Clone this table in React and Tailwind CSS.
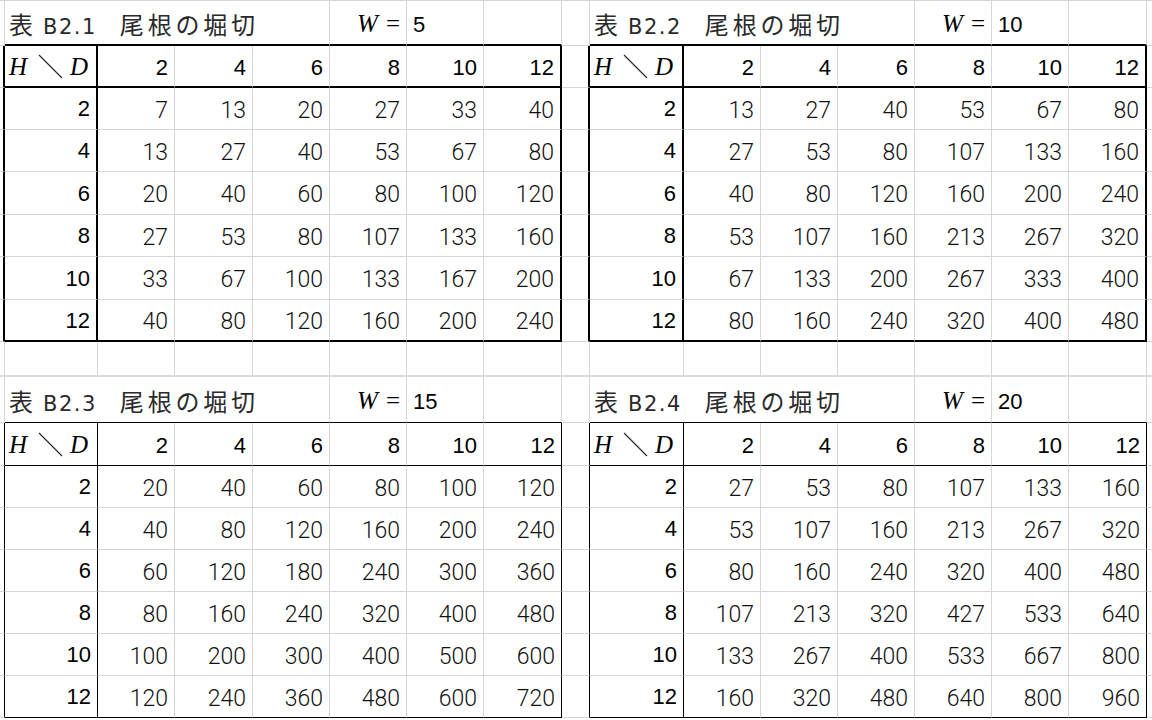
import React from "react";

// column template shared by every sheet row
const COLS =
  "grid grid-cols-[5px_93px_77px_78px_77px_77px_77px_78px_28px_94px_77px_77px_77px_77px_77px_78px_1fr]";

const G_R = "border-r border-r-[#d6d6d6]";
const G_B = "border-b border-b-[#d6d6d6]";

const UPPER = {
  side: "border-r-2 border-r-black",
  bottom: "border-b-2 border-b-black",
};
const LOWER = {
  side: "border-r border-r-black",
  bottom: "border-b border-b-black",
};

const SIZES = [2, 4, 6, 8, 10, 12];

const SANS = "font-['Liberation_Sans',Arial,sans-serif] text-[22px] text-black";
const THIN = "font-['Roboto','Noto_Sans_CJK_JP',sans-serif] font-light text-[23px] text-[#111]";
const MATH = "font-['Liberation_Serif','Times_New_Roman',serif] italic text-[25px] text-black";
const JP = "font-['Noto_Sans_CJK_JP',sans-serif] text-[24px] text-[#2a2a2a]";

const Cell = ({ className = "", children }) => (
  <div className={`flex items-center overflow-visible whitespace-nowrap ${className}`}>
    {children}
  </div>
);

const HD = () => (
  <div className={`flex items-center pl-[4px] pt-[2px] ${MATH}`}>
    <span>H</span>
    <svg width="43" height="26" viewBox="0 0 43 26">
      <line x1="12" y1="1" x2="35" y2="24" stroke="#222" strokeWidth="1.1" />
    </svg>
    <span>D</span>
  </div>
);

const TitleCells = ({ no, w, k }) => (
  <>
    <Cell className={`col-span-4 ${G_R} ${k.bottom} pl-[4px] pt-[5px] ${JP}`}>
      <span className="leading-none">
        <span>表</span>
        <span className="ml-[10px] text-[21px] tracking-[1.5px] font-['DejaVu_Sans',sans-serif]">
          B2.{no}
        </span>
        <span className="ml-[23px] tracking-[3.8px]">尾根の堀切</span>
      </span>
    </Cell>
    <Cell className={`justify-end pr-[6px] pt-[3px] ${G_R} ${k.bottom} ${MATH}`}>
      <span>W</span>
      <span className="not-italic ml-[8px]">=</span>
    </Cell>
    <Cell className={`pl-[6px] pt-[3px] ${G_R} ${k.bottom} ${SANS}`}>{w}</Cell>
    <Cell className={`${G_R} ${k.bottom}`} />
  </>
);

const TitleRow = ({ left, right, k, h }) => (
  <div className={`${COLS} ${h}`}>
    <Cell className={`${G_R} ${G_B}`} />
    <TitleCells {...left} k={k} />
    <Cell className={`${G_R} ${G_B}`} />
    <TitleCells {...right} k={k} />
    <Cell className={G_B} />
  </div>
);

const HeaderCells = ({ k }) => (
  <>
    <Cell className={`${k.side} ${k.bottom}`}>
      <HD />
    </Cell>
    {SIZES.map((d, i) => (
      <Cell
        key={d}
        className={`justify-end pr-[6px] pt-[2px] ${i === 5 ? k.side : G_R} ${k.bottom} ${SANS}`}
      >
        {d}
      </Cell>
    ))}
  </>
);

const HeaderRow = ({ k, h }) => (
  <div className={`${COLS} ${h}`}>
    <Cell className={`${k.side} ${G_B}`} />
    <HeaderCells k={k} />
    <Cell className={`${k.side} ${G_B}`} />
    <HeaderCells k={k} />
    <Cell className={G_B} />
  </div>
);

const DataCells = ({ H, w, k, last }) => {
  const b = last ? k.bottom : G_B;
  return (
    <>
      <Cell className={`justify-end pr-[6px] ${k.side} ${b} ${SANS}`}>{H}</Cell>
      {SIZES.map((d, i) => (
        <Cell
          key={d}
          className={`justify-end pr-[6px] pt-[5px] ${i === 5 ? k.side : G_R} ${b} ${THIN}`}
        >
          {Math.round((H * d * w) / 3)}
        </Cell>
      ))}
    </>
  );
};

const DataRow = ({ H, wl, wr, k, last, h }) => (
  <div className={`${COLS} ${h}`}>
    <Cell className={`${k.side} ${G_B}`} />
    <DataCells H={H} w={wl} k={k} last={last} />
    <Cell className={`${k.side} ${G_B}`} />
    <DataCells H={H} w={wr} k={k} last={last} />
    <Cell className={G_B} />
  </div>
);

const BlankRow = ({ h }) => (
  <div className={`${COLS} ${h}`}>
    {Array.from({ length: 17 }).map((_, i) => (
      <div key={i} className={`${i === 16 ? "" : G_R} border-b-2 border-b-[#dcdcdc]`} />
    ))}
  </div>
);

const UPPER_H = ["h-[42px]", "h-[42px]", "h-[43px]", "h-[42px]", "h-[43px]", "h-[42px]"];

export default function App() {
  return (
    <div className="w-[1152px] h-[720px] bg-white overflow-hidden border-t border-t-[#d6d6d6]">
      <TitleRow left={{ no: 1, w: 5 }} right={{ no: 2, w: 10 }} k={UPPER} h="h-[45px]" />
      <HeaderRow k={UPPER} h="h-[42px]" />
      {SIZES.map((H, i) => (
        <DataRow key={H} H={H} wl={5} wr={10} k={UPPER} last={i === 5} h={UPPER_H[i]} />
      ))}

      <BlankRow h="h-[35px]" />

      <TitleRow left={{ no: 3, w: 15 }} right={{ no: 4, w: 20 }} k={LOWER} h="h-[46px]" />
      <HeaderRow k={LOWER} h="h-[43px]" />
      {SIZES.map((H, i) => (
        <DataRow key={H} H={H} wl={15} wr={20} k={LOWER} last={i === 5} h="h-[42px]" />
      ))}
    </div>
  );
}
